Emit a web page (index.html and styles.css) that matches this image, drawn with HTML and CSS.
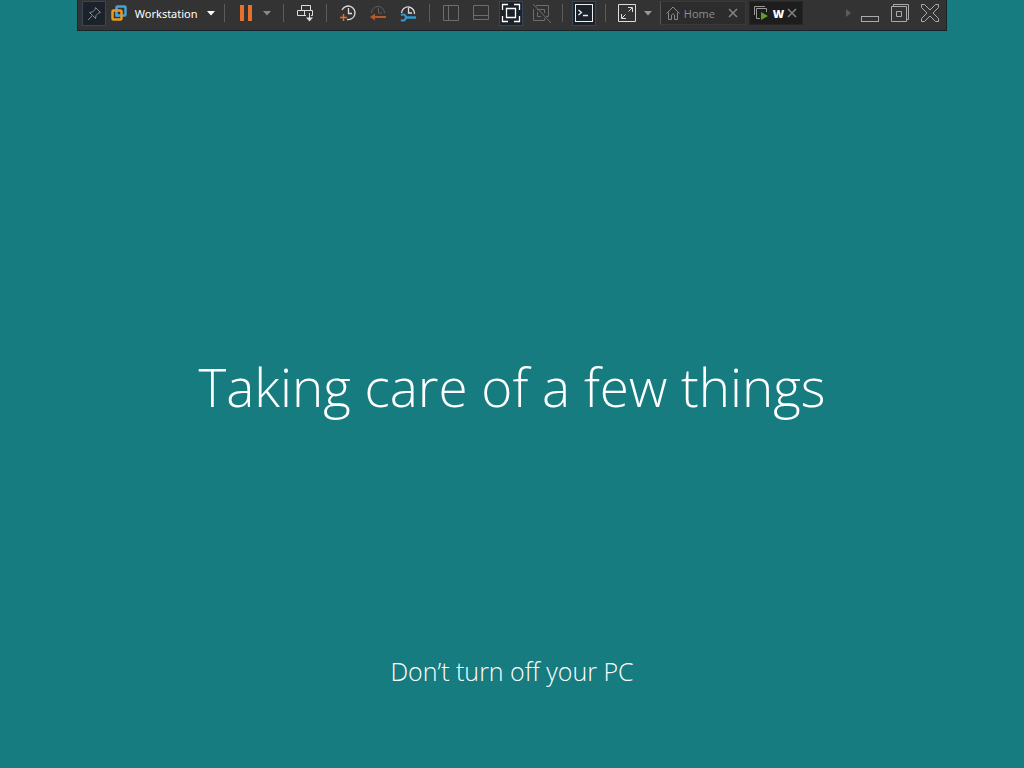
FILE: index.html
```html
<!DOCTYPE html>
<html lang="en">
<head>
<meta charset="utf-8">
<title>Workstation</title>
<link rel="stylesheet" href="styles.css">
</head>
<body>
<header class="toolbar">
  <button class="tool pin" aria-label="Pin toolbar"><svg viewBox="0 0 24 26" width="24" height="26"><rect class="on" x="0.500" y="1.500" width="23" height="24"/><path d="M13.500 7.500L18.500 12.500L16.500 13L14 15.500L13.500 18.500L7.500 12.500L10.500 12L13 9.500ZM10 16L6 20" stroke="#85898e"/></svg></button>
  <button class="menu">
    <svg viewBox="0 0 16 16" width="16" height="16"><rect x="5.500" y="1.500" width="9" height="9" rx="1" stroke="#48a3cf" stroke-width="2.500"/><rect x="1.500" y="5.500" width="9" height="9" rx="1" stroke="#e99a25" stroke-width="2.500"/><path d="M5.500 8V10.500H8" stroke="#48a3cf" stroke-width="2.500"/></svg>
    <span>Workstation</span>
    <svg class="caret" viewBox="0 0 8 5" width="8" height="5"><path d="M0 0H8L4 4.500Z" fill="#fff"/></svg>
  </button>
  <span class="sep"></span>
  <button class="tool" aria-label="Pause"><svg viewBox="0 0 30 26" width="30" height="26"><path d="M9 5h4v16H9ZM17 5h4v16h-4Z" fill="#e8702d"/></svg></button>
  <button class="drop" aria-label="Power options"><svg viewBox="0 0 8 5" width="8" height="5"><path d="M0 0H8L4 4.500Z" fill="#888"/></svg></button>
  <span class="sep"></span>
  <button class="tool" aria-label="Send Ctrl+Alt+Del"><svg viewBox="0 0 30 26" width="30" height="26"><path d="M11.500 5.500H20.500V10.500H11.500ZM16 15.500H7.500V10.500H22.500V15.500H21M14.500 10.500V15M19.500 13V21" stroke="#ddd"/><path d="M16 17.500H23L19.500 21.500Z" fill="#ddd"/></svg></button>
  <span class="sep"></span>
  <button class="tool" aria-label="Take snapshot"><svg viewBox="0 0 30 26" width="30" height="26"><path d="M9 10A6.800 6.800 0 1 1 14 19.500M15.500 8V13.500H19" stroke="#ddd" stroke-width="1.300"/><path d="M10.500 14V21M7 17.500H14" stroke="#e8702d" stroke-width="1.500"/></svg></button>
  <button class="tool" aria-label="Revert snapshot"><svg viewBox="0 0 30 26" width="30" height="26"><path d="M8.500 13A6.500 6.500 0 0 1 21.500 13M15.500 8V13H19" stroke="#5d5d5d"/><path d="M10 17H23" stroke="#b9572a" stroke-width="2"/><path d="M7 17L12 13.500V20.500Z" fill="#b9572a"/></svg></button>
  <button class="tool" aria-label="Manage snapshots"><svg viewBox="0 0 30 26" width="30" height="26"><path d="M8.500 13A6.500 6.500 0 1 1 21.500 14M15.500 8V13H19" stroke="#ddd" stroke-width="1.300"/><path d="M12 17.500H23" stroke="#329bd3" stroke-width="2.500"/><path d="M8 15Q12 13 13 17.500Q12 22 8 20M7 17.500" stroke="#329bd3" stroke-width="2"/></svg></button>
  <span class="sep"></span>
  <button class="tool" aria-label="Library"><svg viewBox="0 0 30 26" width="30" height="26"><path d="M7.500 5.500H22.500V20.500H7.500ZM12.500 5.500V20.500" stroke="#6d6d6d"/></svg></button>
  <button class="tool" aria-label="Thumbnail bar"><svg viewBox="0 0 30 26" width="30" height="26"><path d="M7.500 5.500H22.500V19.500H7.500ZM7.500 15.500H22.500" stroke="#6d6d6d"/></svg></button>
  <button class="tool" aria-label="Full screen"><svg viewBox="0 0 30 26" width="30" height="26"><rect class="on" x="3.500" y="1.500" width="23" height="24"/><path d="M6.500 10V4.500H12M18 4.500H23.500V10M23.500 16V21.500H18M12 21.500H6.500V16M10.500 8.500H19.500V17.500H10.500Z" stroke="#fff" stroke-width="1.300"/></svg></button>
  <button class="tool" aria-label="Unity"><svg viewBox="0 0 30 26" width="30" height="26"><path d="M10 5.500H22.500V16.500H20M7.500 9V20.500H18.500V18M11 9.500H18.500V13M11.500 12V16.500H15M7 4L25 23" stroke="#6d6d6d"/></svg></button>
  <span class="sep"></span>
  <button class="tool" aria-label="Console view"><svg viewBox="0 0 30 26" width="30" height="26"><rect class="on" x="3.500" y="1.500" width="23" height="24"/><rect x="6.500" y="4.500" width="17" height="17" stroke="#eee"/><path d="M9.500 10L12.500 12.500L9.500 15M14 15.500H19" stroke="#eee" stroke-width="1.300"/></svg></button>
  <span class="sep"></span>
  <button class="tool" aria-label="Stretch guest"><svg viewBox="0 0 30 26" width="30" height="26"><path d="M6.500 4.500H23.500V21.500H6.500ZM10 18L13.500 14.500M16.500 11.500L20 8M16 7.500H20.500V12M9.500 14V18.500H14" stroke="#ddd"/></svg></button>
  <button class="drop" aria-label="Stretch options"><svg viewBox="0 0 8 5" width="8" height="5"><path d="M0 0H8L4 4.500Z" fill="#999"/></svg></button>
  <nav class="tabs">
    <div class="tab">
      <a href="#home"><svg viewBox="0 0 14 14" width="14" height="14"><path d="M0.500 7.500L7 1L13.500 7.500M2.500 6.500V13.500H5.500V9Q7 6.500 8.500 9V13.500H11.500V6.500" stroke="#898989"/></svg>Home</a>
      <button class="close" aria-label="Close Home"><svg viewBox="0 0 10 10" width="10" height="10"><path d="M1 1L9 9M9 1L1 9" stroke="#858585" stroke-width="1.500"/></svg></button>
    </div>
    <div class="tab current">
      <a href="#w"><svg viewBox="0 0 16 16" width="16" height="16"><path d="M1.500 10V1.500H12M7 13.500H3.500V3.500H13.500V7" stroke="#999"/><path d="M8 7L15 11L8 15Z" fill="#629d25"/></svg><span>W</span></a>
      <button class="close" aria-label="Close W"><svg viewBox="0 0 10 10" width="10" height="10"><path d="M1 1L9 9M9 1L1 9" stroke="#858585" stroke-width="1.500"/></svg></button>
    </div>
  </nav>
  <div class="window">
    <button class="next" aria-label="Next tab"><svg viewBox="0 0 6 8" width="6" height="8"><path d="M1 0L6 4L1 8Z" fill="#5c5c5c"/></svg></button>
    <button class="tool" aria-label="Minimize"><svg viewBox="0 0 30 26" width="30" height="26"><rect x="6.500" y="16.500" width="17" height="5" stroke="#aaa"/></svg></button>
    <button class="tool" aria-label="Restore"><svg viewBox="0 0 30 26" width="30" height="26"><path d="M6.500 6.500H21.500V21.500H6.500ZM11.500 11.500H16.500V16.500H11.500ZM8.500 6V4.500H23.500V19.500H22" stroke="#aaa"/></svg></button>
    <button class="tool" aria-label="Close"><svg viewBox="0 0 30 26" width="30" height="26"><path d="M6.500 4.500H9.500L15 10L20.500 4.500H23.500V7.500L18 13L23.500 18.500V21.500H20.500L15 16L9.500 21.500H6.500V18.500L12 13L6.500 7.500Z" stroke="#aaa"/></svg></button>
  </div>
</header>
<main class="update">
  <h1>Taking care of a few things</h1>
  <p>Don’t turn off your PC</p>
</main>
</body>
</html>
```
FILE: styles.css
```css
* { box-sizing: border-box; }
body {
  margin: 0;
  min-height: 100vh;
  display: flex;
  flex-direction: column;
  background: #177c80;
  color: #fff;
  font-family: "Open Sans", "Noto Sans", sans-serif;
}
svg { display: block; fill: none; flex: none; }
button {
  margin: 0;
  padding: 0;
  border: 0;
  background: none;
  color: inherit;
  font: inherit;
}
.toolbar {
  width: 85%;
  min-width: max-content;
  margin: 0 auto;
  padding: 0 1px 4px 4px;
  display: flex;
  align-items: center;
  background: #333;
  border: 1px solid #15252b;
  border-top: 0;
}
.tool { width: 30px; height: 26px; flex: none; }
.on { fill: #1b222a; stroke: #36475a; }
.pin { width: 24px; }
.menu {
  width: 112px;
  height: 26px;
  padding-left: 5px;
  display: flex;
  align-items: center;
  font-family: "Noto Sans", sans-serif;
  font-size: 11px;
}
.menu span { margin-left: 8px; }
.caret { margin-left: 9px; }
.drop { width: 16px; padding-left: 2px; }
.sep { width: 1px; height: 18px; margin: 0 6px; background: #5c5c5c; }
.tabs { display: flex; gap: 3px; margin-left: 2px; font-size: 11px; }
.tab {
  width: 86px;
  height: 24px;
  padding: 0 7px 0 5px;
  display: flex;
  align-items: center;
  justify-content: space-between;
  background: #2c2c2c;
  border: 1px solid #3a3a3a;
  border-left-color: #555;
}
.tab a { display: flex; align-items: center; gap: 4px; color: #8d8d8d; text-decoration: none; }
.tab.current { width: 54px; padding: 0 5px 0 3px; background: #1d1d1d; border-color: #262626; }
.tab.current a { color: #fff; font-weight: 800; }
.window { display: flex; align-items: center; margin-left: auto; }
.next { width: 14px; padding-left: 4px; }
.update {
  flex: 1;
  display: flex;
  flex-direction: column;
  align-items: center;
  text-align: center;
  font-weight: 300;
}
.update h1 { margin: auto 0 0; font-size: 53px; line-height: 72px; font-weight: 300; }
.update p { margin: 228px 0 77px; font-size: 25px; line-height: 40px; }
```
